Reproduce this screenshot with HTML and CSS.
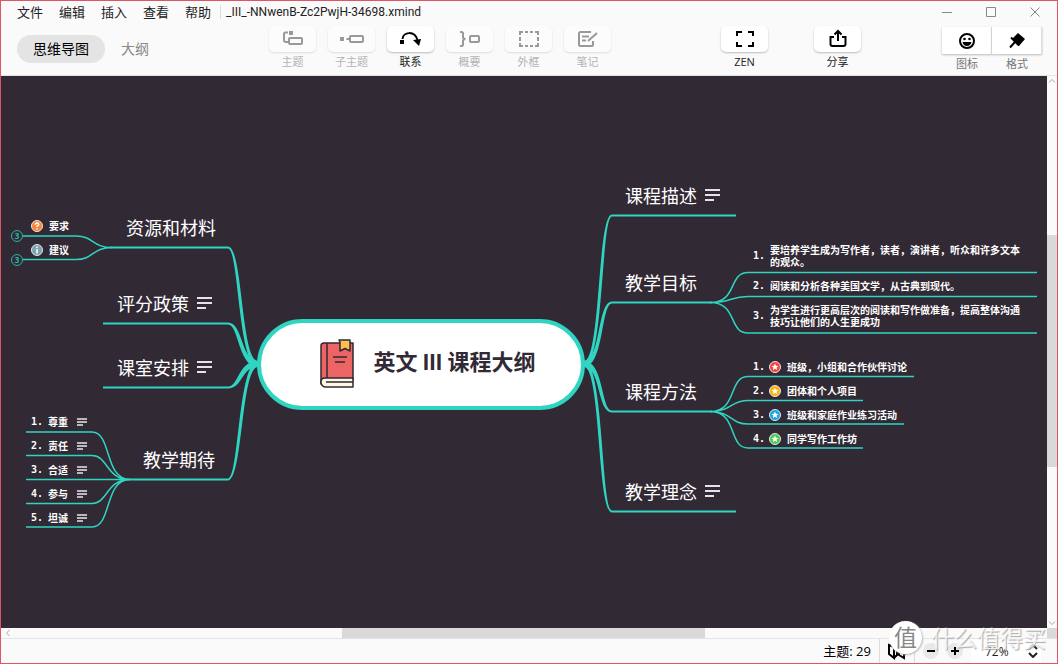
FILE: index.html
```html
<!DOCTYPE html>
<html lang="zh-CN">
<head>
<meta charset="utf-8">
<meta name="viewport" content="width=device-width, initial-scale=1">
<title>_III_-NNwenB-Zc2PwjH-34698.xmind</title>
<link rel="stylesheet" href="styles.css">
</head>
<body>
<div class="window">
  <header class="header">
    <div class="menubar">
      <nav class="menus">
        <button class="menu">文件</button>
        <button class="menu">编辑</button>
        <button class="menu">插入</button>
        <button class="menu">查看</button>
        <button class="menu">帮助</button>
      </nav>
      <span class="filename">_III_-NNwenB-Zc2PwjH-34698.xmind</span>
      <div class="controls">
        <button class="control" aria-label="最小化"><svg width="12" height="12" viewBox="0 0 12 12"><path d="M1 6.500h10"/></svg></button>
        <button class="control" aria-label="最大化"><svg width="12" height="12" viewBox="0 0 12 12"><path d="M1.500 1.500h9v9h-9z"/></svg></button>
        <button class="control" aria-label="关闭"><svg width="12" height="12" viewBox="0 0 12 12"><path d="M1.500 1.500l9 9M10.500 1.500l-9 9"/></svg></button>
      </div>
    </div>
    <div class="toolbar">
      <div class="views">
        <button class="view view-active">思维导图</button>
        <button class="view">大纲</button>
      </div>
      <div class="tools">
        <button class="tool" disabled>
          <span class="face"><svg width="22" height="18" viewBox="0 0 22 18"><path class="line" d="M6 2.500H3.500Q2 2.500 2 4V10Q2 12 4 12H6"/><rect class="solid" x="7" y="1" width="4" height="4"/><rect class="line" x="7" y="8" width="13" height="6" rx="1"/></svg></span>
          <span>主题</span>
        </button>
        <button class="tool" disabled>
          <span class="face"><svg width="26" height="18" viewBox="0 0 26 18"><rect class="solid" x="1" y="7" width="4" height="4"/><path class="line" d="M7.500 9H11"/><rect class="line" x="11" y="6" width="13" height="6" rx="1"/></svg></span>
          <span>子主题</span>
        </button>
        <button class="tool">
          <span class="face"><svg width="24" height="18" viewBox="0 0 24 18"><rect class="solid" x="1" y="10" width="4" height="4"/><path class="line" d="M3.500 9C4 2 15.500 0 18.500 10"/><path class="solid" d="M14 10l8-1-2 7z"/></svg></span>
          <span>联系</span>
        </button>
        <button class="tool" disabled>
          <span class="face"><svg width="24" height="18" viewBox="0 0 24 18"><path class="line" d="M2 2h1.500Q5 2 5 3.500V7Q5 9 7.500 9Q5 9 5 11V14.500Q5 16 3.500 16H2"/><rect class="line" x="12" y="6" width="9" height="6" rx="1"/></svg></span>
          <span>概要</span>
        </button>
        <button class="tool" disabled>
          <span class="face"><svg width="22" height="18" viewBox="0 0 22 18"><path class="line" d="M2 5V2h3M7 2h3M12 2h3M17 2h3v3M20 7v4M20 13v3h-3M15 16h-3M10 16H7M5 16H2v-3M2 11V7"/></svg></span>
          <span>外框</span>
        </button>
        <button class="tool" disabled>
          <span class="face"><svg width="22" height="18" viewBox="0 0 22 18"><path class="line" d="M14 2H3.500Q2 2 2 3.500V14.500Q2 16 3.500 16H14.500Q16 16 16 14.500V11M5 6.500h7M5 10.500h4M11 11l9-8"/></svg></span>
          <span>笔记</span>
        </button>
      </div>
      <button class="tool tool-zen">
        <span class="face"><svg width="20" height="18" viewBox="0 0 20 18"><path class="line" d="M2 6V2h5M13 2h5v4M18 12v4h-5M7 16H2v-4"/></svg></span>
        <span>ZEN</span>
      </button>
      <button class="tool tool-share">
        <span class="face"><svg width="20" height="20" viewBox="0 0 20 20"><path class="line" d="M6 8H2.500V15Q2.500 17 4.500 17H15.500Q17.500 17 17.500 15V8H14M10 12V3M6.500 5.500L10 2l3.500 3.500"/></svg></span>
        <span>分享</span>
      </button>
      <div class="panels">
        <button class="panel">
          <span class="panel-face"><svg width="18" height="18" viewBox="0 0 18 18"><circle class="line" cx="9" cy="9" r="7"/><circle class="solid" cx="6.500" cy="7" r="1.300"/><circle class="solid" cx="11.500" cy="7" r="1.300"/><path class="solid" d="M4.500 10h9Q12.500 14 9 14T4.500 10z"/></svg></span>
          <span>图标</span>
        </button>
        <button class="panel">
          <span class="panel-face"><svg width="18" height="18" viewBox="0 0 18 18"><path class="solid" d="M10 1l7 6-6 7-7-7z"/><path class="line" d="M3 5.500l8 8M6.500 10.500L2 15.500"/></svg></span>
          <span>格式</span>
        </button>
      </div>
    </div>
  </header>

  <main class="workspace">
    <section class="canvas" aria-label="思维导图">
      <div class="map">
        <svg class="links" viewBox="1 76 1046 552" aria-hidden="true">
          <g class="trunk">
            <path d="M228 246.500C243 246.500 241 361 258 361V367C238 367 239 248.500 228 248.500z"/>
            <path d="M228 322.500C243 322.500 241 361 258 361V367C238 367 239 324.500 228 324.500z"/>
            <path d="M228 388.500C243 388.500 241 367 258 367V361C238 361 239 386.500 228 386.500z"/>
            <path d="M228 480.500C243 480.500 241 367 258 367V361C238 361 239 478.500 228 478.500z"/>
            <path d="M612 214.500C597 214.500 601 361 584 361V367C604 367 601 216.500 612 216.500z"/>
            <path d="M612 301.500C597 301.500 601 361 584 361V367C604 367 601 303.500 612 303.500z"/>
            <path d="M612 412.500C597 412.500 601 367 584 367V361C604 361 601 410.500 612 410.500z"/>
            <path d="M612 512.500C597 512.500 601 367 584 367V361C604 361 601 510.500 612 510.500z"/>
          </g>
          <g class="branch">
            <path d="M228 247.500H110M228 323.500H103M228 387.500H103M228 479.500H126"/>
            <path d="M612 215.500H736M612 302.500H712M612 411.500H712M612 511.500H736"/>
          </g>
          <g class="twig">
            <path d="M112 247.500C92 247.500 94 236 76 236H23M112 247.500C92 247.500 94 259.500 76 259.500H23"/>
            <path d="M130 479.500C104 479.500 112 432 92 432H26M130 479.500C106 479.500 108 455.500 92 455.500H26M130 479.500H26M130 479.500C106 479.500 108 503.500 92 503.500H26M130 479.500C104 479.500 112 527 92 527H26"/>
            <path d="M710 302.500C738 302.500 728 272.500 748 272.500H1037M710 302.500C732 302.500 730 296.500 748 296.500H1037M710 302.500C738 302.500 728 333 748 333H1037"/>
            <path d="M710 411.500C738 411.500 728 376.500 748 376.500H914M710 411.500C732 411.500 730 400.500 748 400.500H863M710 411.500C732 411.500 730 424 748 424H904M710 411.500C738 411.500 728 448 748 448H863"/>
          </g>
        </svg>

        <div class="root">
          <svg width="34" height="50" viewBox="0 0 34 50" aria-hidden="true">
            <g stroke="#312934" stroke-width="1.500" stroke-linejoin="round">
              <path fill="#ec6464" d="M1 45V7Q1 4 4 4H33V41H1z"/>
              <path fill="#fff8e2" d="M33 39H5Q1 39 1 43T5 48H33z"/>
              <path fill="none" d="M7 4V39M6 43H33M13 18H27M15 23H25" />
              <path fill="#fdc04e" d="M19 1H30V12L25 9.500L20 12V3z"/>
            </g>
          </svg>
          <h1 class="root-title">英文 III 课程大纲</h1>
        </div>

        <div class="topic topic-resources">资源和材料</div>
        <div class="topic topic-grading">评分政策 <span class="note"></span></div>
        <div class="topic topic-classroom">课室安排 <span class="note"></span></div>
        <div class="topic topic-expect">教学期待</div>
        <div class="topic topic-intro">课程描述 <span class="note"></span></div>
        <div class="topic topic-goals">教学目标</div>
        <div class="topic topic-methods">课程方法</div>
        <div class="topic topic-ideas">教学理念 <span class="note"></span></div>

        <ul class="list list-resources">
          <li class="item"><svg class="marker" viewBox="0 0 14 14"><circle class="disc orange" cx="7" cy="7" r="5.500"/><path class="glyph" d="M5.300 5.800Q5.300 4 7 4T8.700 5.500Q8.700 6.500 7 7.300V8M7 9.200V10.500"/></svg>要求</li>
          <li class="item"><svg class="marker" viewBox="0 0 14 14"><circle class="disc slate" cx="7" cy="7" r="5.500"/><path class="glyph" d="M7 3.500V5M7 6V10.500"/></svg>建议</li>
        </ul>
        <button class="fold fold-first" aria-label="展开要求">3</button>
        <button class="fold fold-second" aria-label="展开建议">3</button>

        <ol class="list list-expect">
          <li class="item"><span class="num">1.</span>尊重<span class="note note-small"></span></li>
          <li class="item"><span class="num">2.</span>责任<span class="note note-small"></span></li>
          <li class="item"><span class="num">3.</span>合适<span class="note note-small"></span></li>
          <li class="item"><span class="num">4.</span>参与<span class="note note-small"></span></li>
          <li class="item"><span class="num">5.</span>坦诚<span class="note note-small"></span></li>
        </ol>

        <ol class="list list-goals">
          <li class="item"><span class="num">1.</span><span>要培养学生成为写作者，读者，演讲者，听众和许多文本<br>的观众。</span></li>
          <li class="item"><span class="num">2.</span><span>阅读和分析各种美国文学，从古典到现代。</span></li>
          <li class="item"><span class="num">3.</span><span>为学生进行更高层次的阅读和写作做准备，提高整体沟通<br>技巧让他们的人生更成功</span></li>
        </ol>

        <ol class="list list-methods">
          <li class="item"><span class="num">1.</span><svg class="marker" viewBox="0 0 14 14"><circle class="disc red" cx="7" cy="7" r="5.500"/><path class="star" d="M7 3.500l1 2.300 2.500.2-1.900 1.600.6 2.500L7 8.800l-2.200 1.300.6-2.500L3.500 6 6 5.800z"/></svg>班级，小组和合作伙伴讨论</li>
          <li class="item"><span class="num">2.</span><svg class="marker" viewBox="0 0 14 14"><circle class="disc yellow" cx="7" cy="7" r="5.500"/><path class="star" d="M7 3.500l1 2.300 2.500.2-1.900 1.600.6 2.500L7 8.800l-2.200 1.300.6-2.500L3.500 6 6 5.800z"/></svg>团体和个人项目</li>
          <li class="item"><span class="num">3.</span><svg class="marker" viewBox="0 0 14 14"><circle class="disc blue" cx="7" cy="7" r="5.500"/><path class="star" d="M7 3.500l1 2.300 2.500.2-1.900 1.600.6 2.500L7 8.800l-2.200 1.300.6-2.500L3.500 6 6 5.800z"/></svg>班级和家庭作业练习活动</li>
          <li class="item"><span class="num">4.</span><svg class="marker" viewBox="0 0 14 14"><circle class="disc green" cx="7" cy="7" r="5.500"/><path class="star" d="M7 3.500l1 2.300 2.500.2-1.900 1.600.6 2.500L7 8.800l-2.200 1.300.6-2.500L3.500 6 6 5.800z"/></svg>同学写作工作坊</li>
        </ol>
      </div>
    </section>
    <div class="scroll scroll-y">
      <svg class="arrow" viewBox="0 0 10 10"><path d="M2 6.500l3-3 3 3"/></svg>
      <div class="track track-y"><div class="thumb thumb-y"></div></div>
      <svg class="arrow" viewBox="0 0 10 10"><path d="M2 3.500l3 3 3-3"/></svg>
    </div>
    <div class="scroll scroll-x">
      <svg class="arrow" viewBox="0 0 10 10"><path d="M6.500 2l-3 3 3 3"/></svg>
      <div class="track track-x"><div class="thumb thumb-x"></div></div>
      <svg class="arrow" viewBox="0 0 10 10"><path d="M3.500 2l3 3-3 3"/></svg>
    </div>
    <div class="corner"></div>
  </main>

  <footer class="status">
    <span class="count">主题: 29</span>
    <button class="overview" aria-label="导航图"><svg width="20" height="18" viewBox="0 0 20 18"><path class="line" d="M2 3v9l5 4V5zM7 16l3-3V3L7 5M12 3v10l5 3V5zM17 5l1-1v9"/></svg></button>
    <div class="zoom">
      <button class="step" aria-label="缩小"><svg width="8" height="8" viewBox="0 0 8 8"><path class="line" d="M0 4h8"/></svg></button>
      <button class="step" aria-label="放大"><svg width="8" height="8" viewBox="0 0 8 8"><path class="line" d="M0 4h8M4 0v8"/></svg></button>
    </div>
    <div class="level">
      <select class="level-select" aria-label="缩放比例"><option>72%</option></select>
      <svg class="level-icon" width="10" height="14" viewBox="0 0 10 14"><path class="line" d="M1 5l4-4 4 4M1 9l4 4 4-4"/></svg>
    </div>
  </footer>

  <div class="watermark"><span class="seal">值</span><span>什么值得买</span></div>
</div>
</body>
</html>
```
FILE: styles.css
```css
:root {
  --teal: #2fd5c1;
  --ink: #312934;
  --bar: #fafafa;
  --rule: #e4e4e4;
}

* { box-sizing: border-box; }

body {
  margin: 0;
  font-family: "Open Sans", "Noto Sans CJK SC", sans-serif;
  color: #222;
}

button {
  margin: 0;
  padding: 0;
  border: 0;
  background: none;
  color: inherit;
  font: inherit;
}

svg { display: block; }

.line { fill: none; stroke: currentColor; stroke-width: 2; }
.solid { fill: currentColor; }

.window {
  position: relative;
  display: flex;
  flex-direction: column;
  height: 100vh;
  border: 1px solid #e05563;
  background: var(--bar);
  overflow: hidden;
}

/* Header */
.header { border-bottom: 1px solid var(--rule); }

.menubar {
  display: flex;
  align-items: center;
  height: 22px;
  padding-left: 16px;
}

.menus { display: flex; gap: 16px; font-size: 13px; line-height: 20px; }

.filename {
  margin-left: 9px;
  padding-left: 5px;
  border-left: 1px solid #ddd;
  font-family: Roboto, sans-serif;
  font-size: 12px;
  line-height: 14px;
}

.controls { display: flex; margin-left: auto; }

.control {
  display: grid;
  place-items: center;
  width: 44px;
  height: 22px;
  color: #888;
}

.control svg { fill: none; stroke: currentColor; }

.toolbar {
  display: flex;
  align-items: flex-start;
  height: 52px;
  padding: 3px 15px 0 16px;
}

.views { display: flex; padding-top: 9px; }

.view {
  height: 28px;
  padding: 0 16px;
  border-radius: 14px;
  color: #888;
  font-size: 14px;
  line-height: 28px;
}

.view-active { background: #e4e4e4; color: #000; }

.tools { display: flex; gap: 12px; margin-left: 104px; }

.tool {
  display: flex;
  flex-direction: column;
  align-items: center;
  width: 47px;
  color: #222;
  font-size: 11px;
  line-height: 20px;
}

.tool:disabled { color: #b4b4b4; }

.face {
  display: grid;
  place-items: center;
  width: 100%;
  height: 26px;
  border-radius: 5px;
  background: #fff;
  box-shadow: 0 1px 2px #bbb;
  color: #000;
}

.tool:disabled .face {
  background: #fcfcfc;
  color: #999;
  box-shadow: 0 1px 2px #ddd;
}

.tool-zen { margin-left: 110px; }
.tool-share { margin-left: 46px; }

.panels { display: flex; margin-left: auto; padding-top: 1px; }

.panel {
  width: 50px;
  color: #777;
  font-size: 11px;
  line-height: 19px;
}

.panel-face {
  display: grid;
  place-items: center;
  height: 27px;
  border-right: 1px solid #ddd;
  background: #fff;
  box-shadow: 0 1px 2px #bbb;
  color: #000;
}

/* Workspace */
.workspace {
  display: grid;
  flex: 1;
  grid-template: minmax(0, 1fr) 10px / minmax(0, 1fr) 10px;
  min-height: 0;
}

.canvas {
  display: grid;
  place-content: center;
  overflow: hidden;
  background: var(--ink);
  color: #fff;
}

.map { position: relative; width: 1046px; height: 552px; }

.links { width: 100%; height: 100%; }
.trunk { fill: var(--teal); }
.branch { fill: none; stroke: var(--teal); stroke-width: 2; }
.twig { fill: none; stroke: var(--teal); stroke-width: 1.5; }

.root {
  position: absolute;
  left: 256px;
  top: 243px;
  display: flex;
  align-items: center;
  justify-content: center;
  gap: 19px;
  width: 328px;
  height: 91px;
  padding: 0 14px;
  border: 4px solid var(--teal);
  border-radius: 46px;
  background: #fff;
  color: var(--ink);
}

.root { padding: 0 14px 2px 28px; }

.root-title {
  margin: 0;
  padding-bottom: 2px;
  font-family: Roboto, "Noto Sans CJK SC", sans-serif;
  font-size: 22px;
  line-height: 32px;
  white-space: nowrap;
}

.topic {
  position: absolute;
  display: flex;
  align-items: center;
  gap: 8px;
  height: 24px;
  font-size: 18px;
  white-space: nowrap;
}

.topic-resources { left: 125px; top: 139px; }
.topic-grading { left: 116px; top: 215px; }
.topic-classroom { left: 116px; top: 279px; }
.topic-expect { left: 142px; top: 371px; }
.topic-intro { left: 624px; top: 107px; }
.topic-goals { left: 624px; top: 194px; }
.topic-methods { left: 624px; top: 303px; }
.topic-ideas { left: 624px; top: 403px; }

.note {
  width: 15px;
  height: 12px;
  background:
    linear-gradient(#e6e2e8, #e6e2e8) 0 0 / 15px 2px no-repeat,
    linear-gradient(#e6e2e8, #e6e2e8) 0 5px / 15px 2px no-repeat,
    linear-gradient(#e6e2e8, #e6e2e8) 0 10px / 9px 2px no-repeat;
}

.note-small {
  width: 10px;
  height: 8px;
  margin-left: 9px;
  background:
    linear-gradient(#bbb7bd, #bbb7bd) 0 0 / 10px 2px no-repeat,
    linear-gradient(#bbb7bd, #bbb7bd) 0 3px / 10px 2px no-repeat,
    linear-gradient(#bbb7bd, #bbb7bd) 0 6px / 6px 2px no-repeat;
}

.list {
  position: absolute;
  margin: 0;
  padding: 0;
  list-style: none;
  font-size: 10px;
  font-weight: 700;
  line-height: 12px;
  white-space: nowrap;
}

.item { display: flex; align-items: center; height: 24px; }

.num { width: 17px; font-family: "DejaVu Sans Mono", monospace; }

.list-resources { left: 29px; top: 138px; }
.list-expect { left: 30px; top: 334px; }
.list-goals { left: 752px; top: 168px; display: grid; gap: 12px; }
.list-goals .item { height: auto; }
.list-methods { left: 752px; top: 279px; }

.marker { width: 14px; height: 14px; margin-right: 5px; }
.list-methods .marker { margin-left: -2px; }

.disc { stroke: #e8e4ea; stroke-width: 1; }
.orange { fill: #fb8332; }
.slate { fill: #7aa5ae; }
.red { fill: #f9423f; }
.yellow { fill: #ffb20d; }
.blue { fill: #18a7e8; }
.green { fill: #4bcb50; }
.glyph { fill: none; stroke: #fff; stroke-width: 1.5; }
.star { fill: #fff; }

.fold {
  position: absolute;
  left: 10px;
  width: 12px;
  height: 12px;
  border: 1px solid #2bb5a8;
  border-radius: 50%;
  color: #2bb5a8;
  font-size: 8px;
  font-weight: 700;
  line-height: 10px;
}

.fold-first { top: 154px; }
.fold-second { top: 178px; }

/* Scroll bars */
.scroll { display: flex; background: var(--bar); }
.scroll-y { flex-direction: column; grid-area: 1 / 2; }
.scroll-x { grid-area: 2 / 1; }
.corner { grid-area: 2 / 2; background: #d9d9d9; }
.arrow { width: 10px; height: 10px; margin: 0 2px; fill: none; stroke: #aaa; }
.scroll-y .arrow { margin: 0; }
.track { display: flex; flex: 1; }
.track-y { flex-direction: column; padding-top: 149px; }
.track-x { padding-left: 327px; }
.thumb { background: #d9d9d9; }
.thumb-y { flex: 0 0 232px; }
.thumb-x { flex: 0 0 363px; }

/* Status bar */
.status {
  display: flex;
  align-items: stretch;
  height: 25px;
  padding-right: 16px;
  border-top: 1px solid var(--rule);
}

.count {
  margin-left: auto;
  padding-right: 8px;
  color: #000;
  font-size: 13px;
  line-height: 24px;
}

.overview {
  display: grid;
  place-items: center;
  width: 36px;
  border: solid #ddd;
  border-width: 0 1px;
  color: #000;
}

.zoom { display: flex; align-items: center; gap: 8px; padding: 0 8px; }

.step {
  display: grid;
  place-items: center;
  width: 16px;
  height: 16px;
  border-radius: 50%;
  background: #e8e8e8;
  color: #000;
}

.level { position: relative; width: 70px; background: #fff; }

.level-select {
  width: 100%;
  height: 100%;
  padding: 0 14px;
  border: 0;
  background: none;
  appearance: none;
  color: #222;
  font: 12px "Open Sans", sans-serif;
}

.level-icon { position: absolute; right: 3px; top: 5px; pointer-events: none; }

/* Watermark over the bottom right corner */
.watermark {
  position: absolute;
  right: 11px;
  bottom: 9px;
  display: flex;
  align-items: center;
  gap: 9px;
  color: #fffc;
  font-size: 23px;
  line-height: 32px;
  text-shadow: 1px 1px 1px #aaa;
  pointer-events: none;
}

.seal {
  width: 33px;
  height: 33px;
  border-radius: 50%;
  background: #fff;
  color: #888;
  text-align: center;
  text-shadow: none;
  box-shadow: 1px 1px 2px #bbb;
}
```
